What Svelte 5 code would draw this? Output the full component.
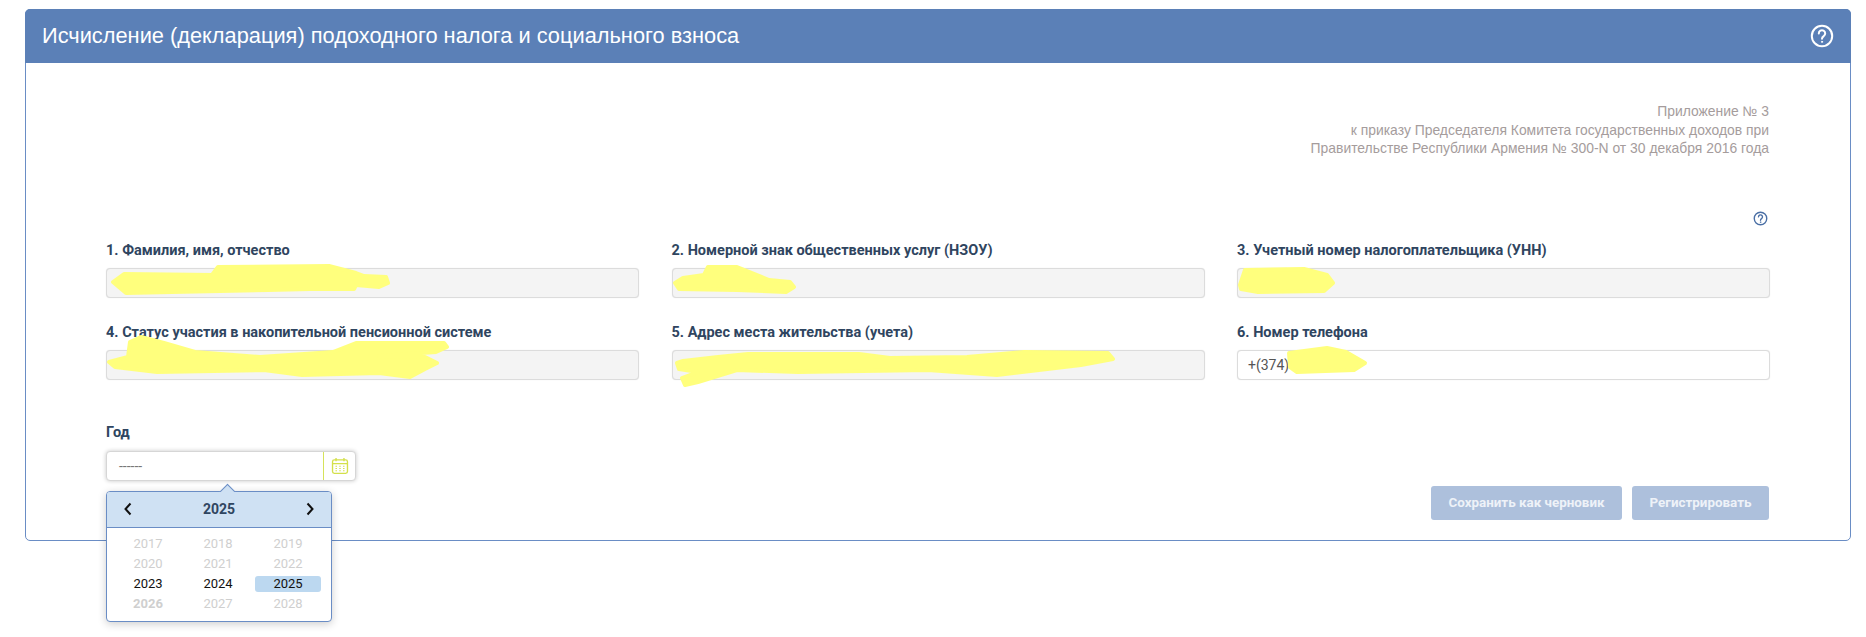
<script>
    const fields = [
        { label: '1. Фамилия, имя, отчество', value: '', disabled: true },
        { label: '2. Номерной знак общественных услуг (НЗОУ)', value: '', disabled: true },
        { label: '3. Учетный номер налогоплательщика (УНН)', value: '', disabled: true },
        { label: '4. Статус участия в накопительной пенсионной системе', value: '', disabled: true },
        { label: '5. Адрес места жительства (учета)', value: '', disabled: true },
        { label: '6. Номер телефона', value: '+(374)', disabled: false }
    ];

    const years = [2017, 2018, 2019, 2020, 2021, 2022, 2023, 2024, 2025, 2026, 2027, 2028];
    const enabledYears = [2023, 2024, 2025];
    const selectedYear = 2025;

    // redaction marks painted over the screenshot
    const marks = [
        'M113 282 124 274 212 275 218 267 329 266 356 273 364 276 386 277 388 283 379 287 356 285 354 289 310 289 268 290 172 292 126 293Z',
        'M109 362 128 357 130 342 141 337 164 343 195 352 260 357 333 352 356 343 444 343 447 347 436 352 379 356 425 357 437 363 425 369 410 377 379 373 302 375 264 370 157 372 115 367Z',
        'M675 283 683 278 704 275 708 267 737 267 769 280 790 282 794 287 786 292 737 290 679 289Z',
        'M677 363 683 361 718 357 748 354 859 354 890 358 967 357 1024 352 1108 353 1113 359 1081 365 997 375 928 370 798 372 737 370 698 382 685 385 682 378 698 372 679 369Z',
        'M1240 285 1245 270 1304 269 1327 275 1333 283 1324 291 1258 292 1241 289Z',
        'M1289 353 1327 348 1346 352 1365 363 1354 370 1297 372 1290 367Z'
    ];
</script>

<div class="page">
    <section class="card">
        <header class="card-head">
            <h1>Исчисление (декларация) подоходного налога и социального взноса</h1>
            <svg class="help-big" viewBox="0 0 24 24" fill="none" stroke="#fff" stroke-width="2" stroke-linecap="round">
                <circle cx="12" cy="12" r="10.2" />
                <path d="M8.8 9.4a3.2 3.2 0 1 1 4.9 2.7c-1 .7-1.7 1.3-1.7 2.6" />
                <circle cx="12" cy="17.8" r=".6" fill="#fff" stroke-width="1" />
            </svg>
        </header>

        <div class="card-body">
            <p class="note">
                Приложение № 3<br />
                к приказу Председателя Комитета государственных доходов при<br />
                Правительстве Республики Армения № 300-N от 30 декабря 2016 года
            </p>

            <div class="help-row">
                <svg class="help-small" viewBox="0 0 24 24" fill="none" stroke="#4a6fa5" stroke-width="2.2" stroke-linecap="round">
                    <circle cx="12" cy="12" r="10" />
                    <path d="M8.8 9.4a3.2 3.2 0 1 1 4.9 2.7c-1 .7-1.7 1.3-1.7 2.6" />
                    <circle cx="12" cy="17.8" r=".6" fill="#4a6fa5" stroke-width="1" />
                </svg>
            </div>

            <div class="grid">
                {#each fields as field}
                    <div class="field">
                        <span class="label">{field.label}</span>
                        <div class="input" class:disabled={field.disabled}>{field.value}</div>
                    </div>
                {/each}
            </div>

            <div class="bottom">
                <div class="year">
                    <span class="label">Год</span>
                    <div class="year-input">
                        <span class="dashes">------</span>
                        <span class="cal">
                            <svg viewBox="0 0 20 20" fill="none" stroke="#d4e04a" stroke-width="1.5">
                                <rect x="1.7" y="3.2" width="16.6" height="15" rx="2" />
                                <path d="M1.7 7.4h16.6M5.6 1v3.6M14.4 1v3.6" />
                                <path d="M5 10.3h1.6M9.2 10.3h1.6M13.4 10.3h1.6M5 12.8h1.6M9.2 12.8h1.6M13.4 12.8h1.6M5 15.3h1.6M9.2 15.3h1.6M13.4 15.3h1.6" stroke-width="1.3" />
                            </svg>
                        </span>
                    </div>

                    <div class="popup">
                        <span class="caret"></span>
                        <div class="popup-head">
                            <svg class="arrow" viewBox="0 0 10 14" fill="none" stroke="#111" stroke-width="2"><path d="M7.5 1.5 2.5 7l5 5.5" /></svg>
                            <strong>2025</strong>
                            <svg class="arrow" viewBox="0 0 10 14" fill="none" stroke="#111" stroke-width="2"><path d="M2.5 1.5 7.5 7l-5 5.5" /></svg>
                        </div>
                        <div class="years">
                            {#each years as y}
                                <span
                                    class="y"
                                    class:on={enabledYears.includes(y)}
                                    class:selected={y === selectedYear}
                                    class:today={y === 2026}>{y}</span>
                            {/each}
                        </div>
                    </div>
                </div>

                <div class="actions">
                    <button class="save" disabled>Сохранить как черновик</button>
                    <button class="reg" disabled>Регистрировать</button>
                </div>
            </div>
        </div>
    </section>

    <svg class="redactions" viewBox="0 0 1866 637">
        {#each marks as d}
            <path {d} fill="#ffff7d" stroke="#ffff7d" stroke-width="4" stroke-linejoin="round" />
        {/each}
    </svg>
</div>

<style>
    :global(body) {
        margin: 0;
        background: #fff;
        font-family: Roboto, "Liberation Sans", sans-serif;
    }

    .page {
        position: relative;
        height: 637px;
        padding: 9px 15px 0 25px;
        box-sizing: border-box;
        overflow: hidden;
    }

    .card {
        height: 532px;
        box-sizing: border-box;
        border: 1px solid #6a8dc5;
        border-radius: 5px;
        background: #fff;
    }

    .card-head {
        display: flex;
        align-items: center;
        justify-content: space-between;
        height: 54px;
        margin: -1px -1px 0;
        padding: 0 17px 0 17px;
        background: #5b80b7;
        border-radius: 5px 5px 0 0;
    }

    h1 {
        margin: 0;
        font-family: "Liberation Sans", Arial, sans-serif;
        font-size: 21.8px;
        font-weight: 400;
        color: #fff;
    }

    .help-big {
        width: 24px;
        height: 24px;
    }

    .card-body {
        padding: 39px 81px 0 80px;
    }

    .note {
        margin: 0;
        text-align: right;
        font-family: "Liberation Sans", Arial, sans-serif;
        font-size: 13.9px;
        line-height: 18.5px;
        color: #a59c9c;
    }

    .help-row {
        display: flex;
        justify-content: flex-end;
        margin-top: 53.5px;
        padding-right: 1px;
    }

    .help-small {
        width: 15px;
        height: 15px;
    }

    .grid {
        display: grid;
        grid-template-columns: repeat(3, 533px);
        column-gap: 32.5px;
        row-gap: 27px;
        margin-top: 17px;
    }

    .field {
        display: flex;
        flex-direction: column;
        gap: 9px;
    }

    .label {
        display: block;
        height: 16px;
        font-size: 14.5px;
        line-height: 16px;
        font-weight: 700;
        color: #2f4560;
    }

    .input {
        height: 30px;
        box-sizing: border-box;
        padding: 0 10px;
        border: 1px solid #dcdcdc;
        border-radius: 4px;
        box-shadow: 0 0 1px rgba(0, 0, 0, 0.15);
        font-size: 14px;
        line-height: 28px;
        color: #555;
        background: #fff;
    }

    .input.disabled {
        background: #f4f4f4;
    }

    .bottom {
        display: flex;
        justify-content: space-between;
        margin-top: 44.5px;
    }

    .year {
        position: relative;
        width: 250px;
    }

    .year .label {
        margin-bottom: 10px;
    }

    .year-input {
        display: flex;
        height: 30px;
        box-sizing: border-box;
        border: 1px solid #d6d6d6;
        border-radius: 4px;
        box-shadow: 0 0 4px rgba(0, 0, 0, 0.22);
        background: #fff;
    }

    .dashes {
        flex: 1;
        padding-left: 12px;
        font-size: 14px;
        line-height: 28px;
        color: #777;
        border-right: 1px solid #d6e25a;
    }

    .cal {
        display: flex;
        align-items: center;
        justify-content: center;
        width: 31px;
    }

    .cal svg {
        width: 18px;
        height: 18px;
    }

    .popup {
        position: absolute;
        top: 66px;
        left: 0;
        width: 226px;
        height: 131px;
        box-sizing: border-box;
        border: 1px solid #6a8dc5;
        border-radius: 4px;
        background: #fff;
        box-shadow: 0 2px 8px rgba(0, 0, 0, 0.2);
        z-index: 2;
    }

    .caret {
        position: absolute;
        top: -6px;
        left: 115px;
        width: 11px;
        height: 11px;
        box-sizing: border-box;
        border-top: 1px solid #6a8dc5;
        border-left: 1px solid #6a8dc5;
        background: #cfe1f3;
        transform: rotate(45deg);
    }

    .popup-head {
        position: relative;
        display: flex;
        align-items: center;
        justify-content: space-between;
        height: 35px;
        padding: 0 16px;
        background: #cfe1f3;
        border-bottom: 1px solid #6a8dc5;
        border-radius: 3px 3px 0 0;
    }

    .popup-head strong {
        font-size: 14px;
        font-weight: 700;
        color: #2f4560;
    }

    .arrow {
        width: 10px;
        height: 14px;
    }

    .years {
        display: grid;
        grid-template-columns: repeat(3, 66px);
        column-gap: 4px;
        padding: 6px 8px 0;
    }

    .y {
        height: 16px;
        margin: 2px 0;
        border-radius: 3px;
        font-size: 13px;
        line-height: 16px;
        text-align: center;
        color: #cfcfcf;
    }

    .y.today {
        font-weight: 700;
    }

    .y.on {
        color: #111;
    }

    .y.selected {
        background: #bcd8f0;
    }

    .actions {
        display: flex;
        gap: 10px;
        margin-top: 61px;
    }

    button {
        height: 34px;
        padding: 0;
        border: 0;
        border-radius: 3px;
        font-family: inherit;
        font-size: 13.4px;
        font-weight: 700;
        color: #eef2f8;
        background: #adc0dc;
    }

    .save {
        width: 191px;
    }

    .reg {
        width: 137px;
    }

    .redactions {
        position: absolute;
        top: 0;
        left: 0;
        width: 1866px;
        height: 637px;
        pointer-events: none;
        z-index: 3;
    }
</style>
